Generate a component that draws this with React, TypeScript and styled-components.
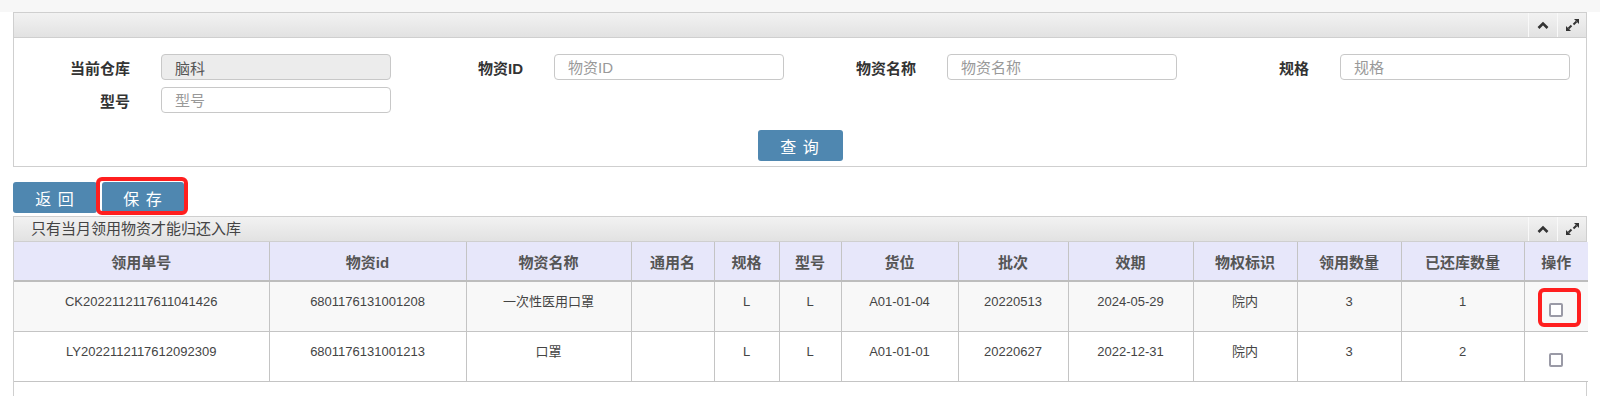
import React, { ReactElement } from 'react';
import styled, { createGlobalStyle } from 'styled-components';

const GlobalStyle = createGlobalStyle`
  body {
    margin: 0;
    background: #fff;
    font-family: "Liberation Sans", "Noto Sans CJK SC", sans-serif;
    color: #333;
  }
`;

interface Row {
  orderNo: string;
  materialId: string;
  name: string;
  common: string;
  spec: string;
  model: string;
  location: string;
  batch: string;
  expiry: string;
  owner: string;
  used: number;
  returned: number;
  marked?: boolean;
}

const rows: Row[] = [
  {
    orderNo: 'CK2022112117611041426',
    materialId: '6801176131001208',
    name: '一次性医用口罩',
    common: '',
    spec: 'L',
    model: 'L',
    location: 'A01-01-04',
    batch: '20220513',
    expiry: '2024-05-29',
    owner: '院内',
    used: 3,
    returned: 1,
    marked: true,
  },
  {
    orderNo: 'LY2022112117612092309',
    materialId: '6801176131001213',
    name: '口罩',
    common: '',
    spec: 'L',
    model: 'L',
    location: 'A01-01-01',
    batch: '20220627',
    expiry: '2022-12-31',
    owner: '院内',
    used: 3,
    returned: 2,
  },
];

const columns = [
  { title: '领用单号', width: 255 },
  { title: '物资id', width: 197 },
  { title: '物资名称', width: 165 },
  { title: '通用名', width: 83 },
  { title: '规格', width: 65 },
  { title: '型号', width: 62 },
  { title: '货位', width: 117 },
  { title: '批次', width: 110 },
  { title: '效期', width: 125 },
  { title: '物权标识', width: 104 },
  { title: '领用数量', width: 104 },
  { title: '已还库数量', width: 123 },
  { title: '操作', width: 64 },
];

const TopStrip = styled.div`
  height: 12px;
  background: #f7f7f7;
`;

const Page = styled.div`
  padding: 0 13px;
`;

const Panel = styled.div`
  border: 1px solid #cfcfcf;
  background: #fff;
`;

const PanelHeader = styled.div`
  display: flex;
  align-items: stretch;
  height: 24px;
  background: linear-gradient(to bottom, #f2f2f2, #e2e2e2);
  border-bottom: 1px solid #cfcfcf;
`;

const PanelTitle = styled.div`
  flex: 1;
  padding-left: 17px;
  font-size: 15px;
  line-height: 24px;
  color: #444;
`;

const HeaderTool = styled.div`
  width: 28px;
  display: flex;
  align-items: center;
  justify-content: center;
  border-left: 1px solid #f9f9f9;
`;

const FormBody = styled.div`
  padding: 16px 0 5px;
`;

const FieldGrid = styled.div`
  display: grid;
  grid-template-columns: repeat(4, 1fr);
  row-gap: 7px;
`;

const Field = styled.div`
  display: flex;
  align-items: center;
`;

const Label = styled.label`
  width: 116px;
  margin-right: 31px;
  text-align: right;
  font-size: 15px;
  font-weight: bold;
  color: #333;
`;

const Input = styled.input`
  box-sizing: border-box;
  width: 230px;
  height: 26px;
  padding: 0 13px;
  border: 1px solid #c8c8c8;
  border-radius: 4px;
  font-family: inherit;
  font-size: 15px;
  color: #555;
  background: #fff;
  outline: none;

  &::placeholder {
    color: #999;
  }

  &:disabled {
    background: #ececec;
    color: #555;
  }
`;

const QueryRow = styled.div`
  display: flex;
  justify-content: center;
  margin-top: 17px;
`;

const Button = styled.button<{ $width: number; $marked?: boolean }>`
  position: relative;
  width: ${(p) => p.$width}px;
  height: 31px;
  padding: 0;
  border: none;
  border-radius: 3px;
  background: #4f87b0;
  color: #fff;
  font-family: inherit;
  font-size: 16px;
  letter-spacing: 1px;
  cursor: pointer;

  ${(p) =>
    p.$marked &&
    `
    &::after {
      content: '';
      position: absolute;
      top: -5px;
      bottom: -2px;
      left: -6px;
      right: -4px;
      border: 4px solid #ff1f1f;
      border-radius: 6px;
      pointer-events: none;
    }
  `}
`;

const ActionBar = styled.div`
  display: flex;
  gap: 5px;
  margin: 15px 0 3px;
`;

const Table = styled.table`
  width: 100%;
  border-collapse: collapse;
  table-layout: fixed;
`;

const Th = styled.th`
  height: 38px;
  padding: 0 4px;
  background: #e7e7fa;
  border-right: 1px solid #c4c4c4;
  border-bottom: 2px solid #bdbdbd;
  font-size: 15px;
  font-weight: bold;
  color: #555;
  text-align: center;

  &:last-child {
    border-right: none;
  }
`;

const Tr = styled.tr<{ $striped?: boolean }>`
  background: ${(p) => (p.$striped ? '#f8f8f8' : '#fff')};
`;

const Td = styled.td<{ $check?: boolean }>`
  height: 49px;
  box-sizing: border-box;
  padding: ${(p) => (p.$check ? '6px 4px 0' : '10px 4px 19px')};
  border-right: 1px solid #c4c4c4;
  border-bottom: 1px solid #c4c4c4;
  font-size: 13px;
  line-height: 20px;
  color: #444;
  text-align: center;
  vertical-align: ${(p) => (p.$check ? 'middle' : 'top')};

  &:last-child {
    border-right: none;
  }
`;

const CheckWrap = styled.span<{ $marked?: boolean }>`
  position: relative;
  display: inline-block;
  vertical-align: middle;
  width: 14px;
  height: 14px;

  ${(p) =>
    p.$marked &&
    `
    &::after {
      content: '';
      position: absolute;
      top: -15px;
      bottom: -10px;
      left: -11px;
      right: -18px;
      border: 4px solid #ff1f1f;
      border-radius: 6px;
      pointer-events: none;
    }
  `}
`;

const Check = styled.input`
  appearance: none;
  box-sizing: border-box;
  display: block;
  margin: 0;
  width: 14px;
  height: 14px;
  border: 2px solid #9a9aa6;
  border-radius: 2px;
  background: #fff;
`;

const TableFill = styled.div`
  height: 20px;
`;

const ChevronUp = (): ReactElement => (
  <svg width="12" height="8" viewBox="0 0 12 8">
    <path d="M1.5 7 L6 2.5 L10.5 7" fill="none" stroke="#333" strokeWidth="2.6" />
  </svg>
);

const ExpandIcon = (): ReactElement => (
  <svg width="13" height="12" viewBox="0 0 13 12">
    <path d="M13 0 L13 5 L8 0 Z" fill="#333" />
    <path d="M10.5 2.5 L7.5 5.5" stroke="#333" strokeWidth="2" />
    <path d="M0 12 L0 7 L5 12 Z" fill="#333" />
    <path d="M2.5 9.5 L5.5 6.5" stroke="#333" strokeWidth="2" />
  </svg>
);

const PanelTools = (): ReactElement => (
  <>
    <HeaderTool>
      <ChevronUp />
    </HeaderTool>
    <HeaderTool>
      <ExpandIcon />
    </HeaderTool>
  </>
);

export default function App(): ReactElement {
  return (
    <>
      <GlobalStyle />
      <TopStrip />
      <Page>
        <Panel>
          <PanelHeader>
            <PanelTitle />
            <PanelTools />
          </PanelHeader>
          <FormBody>
            <FieldGrid>
              <Field>
                <Label>当前仓库</Label>
                <Input value="脑科" disabled readOnly />
              </Field>
              <Field>
                <Label>物资ID</Label>
                <Input placeholder="物资ID" />
              </Field>
              <Field>
                <Label>物资名称</Label>
                <Input placeholder="物资名称" />
              </Field>
              <Field>
                <Label>规格</Label>
                <Input placeholder="规格" />
              </Field>
              <Field>
                <Label>型号</Label>
                <Input placeholder="型号" />
              </Field>
            </FieldGrid>
            <QueryRow>
              <Button $width={85}>查 询</Button>
            </QueryRow>
          </FormBody>
        </Panel>

        <ActionBar>
          <Button $width={84}>返 回</Button>
          <Button $width={82} $marked>
            保 存
          </Button>
        </ActionBar>

        <Panel>
          <PanelHeader>
            <PanelTitle>只有当月领用物资才能归还入库</PanelTitle>
            <PanelTools />
          </PanelHeader>
          <Table>
            <colgroup>
              {columns.map((c) => (
                <col key={c.title} style={{ width: c.width }} />
              ))}
            </colgroup>
            <thead>
              <tr>
                {columns.map((c) => (
                  <Th key={c.title}>{c.title}</Th>
                ))}
              </tr>
            </thead>
            <tbody>
              {rows.map((r, i) => (
                <Tr key={r.orderNo} $striped={i % 2 === 0}>
                  <Td>{r.orderNo}</Td>
                  <Td>{r.materialId}</Td>
                  <Td>{r.name}</Td>
                  <Td>{r.common}</Td>
                  <Td>{r.spec}</Td>
                  <Td>{r.model}</Td>
                  <Td>{r.location}</Td>
                  <Td>{r.batch}</Td>
                  <Td>{r.expiry}</Td>
                  <Td>{r.owner}</Td>
                  <Td>{r.used}</Td>
                  <Td>{r.returned}</Td>
                  <Td $check>
                    <CheckWrap $marked={r.marked}>
                      <Check type="checkbox" />
                    </CheckWrap>
                  </Td>
                </Tr>
              ))}
            </tbody>
          </Table>
          <TableFill />
        </Panel>
      </Page>
    </>
  );
}
